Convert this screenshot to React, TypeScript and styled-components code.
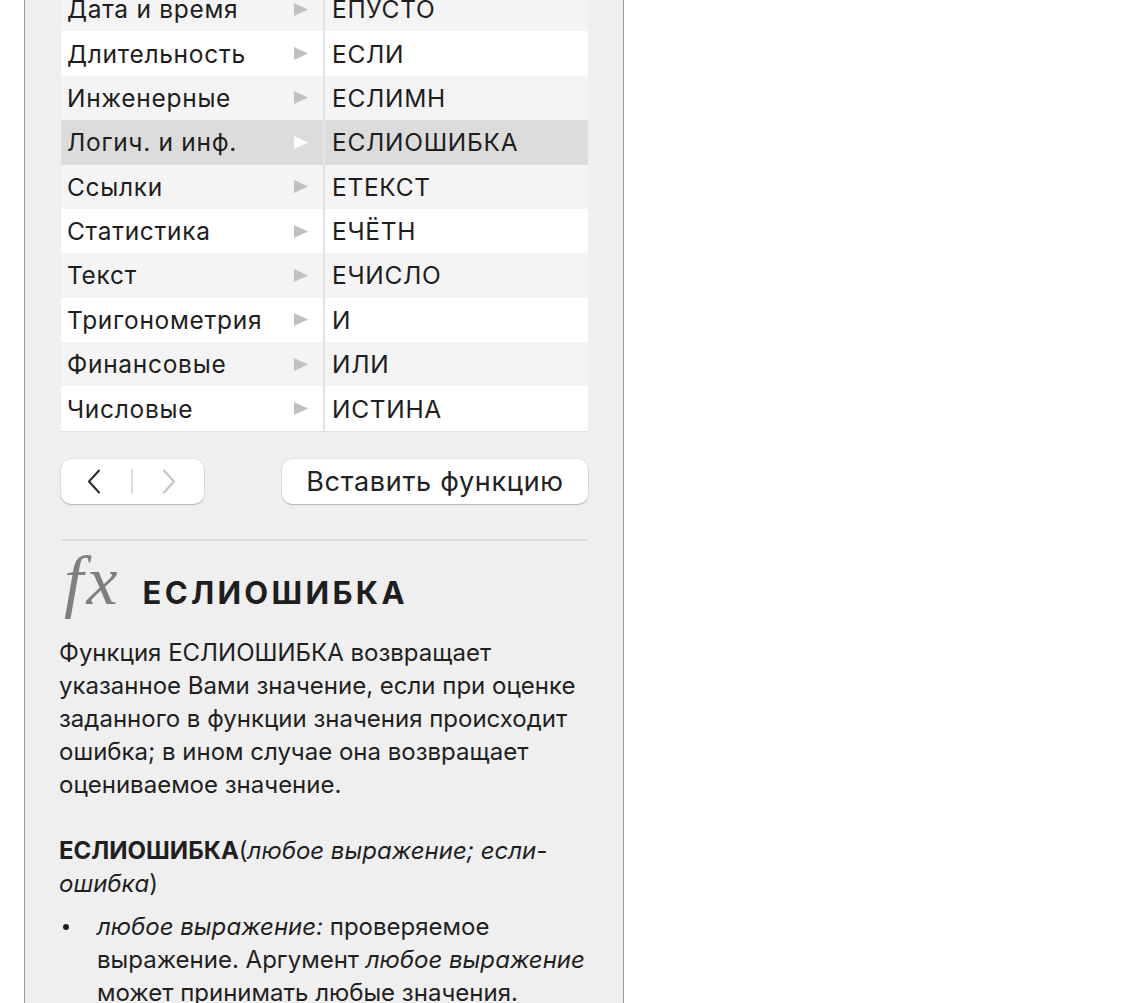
import styled, { createGlobalStyle } from "styled-components";

const GlobalStyle = createGlobalStyle`
  html, body {
    margin: 0;
    padding: 0;
    background: #ffffff;
    overflow: hidden;
  }
  body {
    font-family: Inter, "Noto Sans", "Liberation Sans", sans-serif;
    color: #1f1f1f;
  }
`;

const Panel = styled.div`
  box-sizing: border-box;
  width: 600px;
  height: 1003px;
  margin-left: 24px;
  padding: 0 35px 0 36px;
  background: #efefef;
  border-left: 1px solid #9c9c9c;
  border-right: 1px solid #9c9c9c;
  overflow: hidden;
`;

const Table = styled.div`
  margin-top: -13px;
  display: flex;
  flex-direction: column;
  border-bottom: 1px solid #e2e2e2;
`;

const Row = styled.div<{ $bg: string }>`
  display: grid;
  grid-template-columns: 262px 2px 1fr;
  height: 44.375px;
  background: ${(p) => p.$bg};
  font-size: 24.5px;
  letter-spacing: 0.7px;
  color: #1e1e1e;
`;

const Category = styled.div`
  display: flex;
  align-items: center;
  justify-content: space-between;
  padding: 0 15px 0 6px;
`;

const Divider = styled.div`
  background: #e3e3e3;
`;

const Func = styled.div`
  display: flex;
  align-items: center;
  padding-left: 7px;
`;

const ButtonRow = styled.div`
  display: flex;
  justify-content: space-between;
  margin-top: 27px;
`;

const NavButton = styled.div`
  width: 143px;
  height: 45px;
  box-sizing: border-box;
  background: #ffffff;
  border-radius: 10px;
  box-shadow: 0 1px 1.5px rgba(0, 0, 0, 0.22), 0 0 0 0.5px rgba(0, 0, 0, 0.08);
  display: flex;
  align-items: center;
  justify-content: space-between;
  padding: 0 28px 0 26px;
`;

const NavSep = styled.div`
  width: 2px;
  height: 25px;
  background: #dddddd;
`;

const InsertButton = styled.div`
  width: 306px;
  height: 45px;
  box-sizing: border-box;
  background: #ffffff;
  border-radius: 10px;
  box-shadow: 0 1px 1.5px rgba(0, 0, 0, 0.22), 0 0 0 0.5px rgba(0, 0, 0, 0.08);
  display: flex;
  align-items: center;
  justify-content: center;
  font-size: 27px;
  letter-spacing: 0.7px;
  color: #222;
`;

const Separator = styled.div`
  height: 2px;
  background: #dcdcdc;
  margin-top: 35px;
`;

const Header = styled.div`
  display: flex;
  align-items: baseline;
  gap: 22px;
  margin-top: 10px;
  padding-left: 3px;
`;

const Fx = styled.span`
  font-family: "Liberation Serif", "DejaVu Serif", serif;
  font-style: italic;
  font-size: 70px;
  line-height: 60px;
  letter-spacing: 3px;
  color: #7f7f7f;
`;

const Title = styled.h1`
  margin: 0;
  font-size: 31px;
  font-weight: 700;
  letter-spacing: 3.3px;
  color: #1e1e1e;
`;

const Description = styled.div`
  width: 533px;
  margin-left: -2px;
  margin-top: 25px;
  font-size: 24px;
  line-height: 33px;
  color: #1f1f1f;

  p {
    margin: 0;
  }
  p + p {
    margin-top: 33px;
  }
`;

const ArgList = styled.ul`
  list-style: none;
  margin: 10px 0 0;
  padding: 0;
`;

const ArgItem = styled.li`
  display: flex;
  align-items: flex-start;
`;

const Dot = styled.span`
  flex: none;
  width: 6px;
  height: 6px;
  margin: 14px 28px 0 4px;
  border-radius: 50%;
  background: #1f1f1f;
`;

const Arrow = ({ color }: { color: string }) => (
  <svg width="14" height="13" viewBox="0 0 14 13">
    <polygon points="0,0 14,6.5 0,13" fill={color} />
  </svg>
);

const Chevron = ({ dir, color }: { dir: "left" | "right"; color: string }) => (
  <svg width="14" height="25" viewBox="0 0 14 25">
    <polyline
      points={dir === "left" ? "12,1.5 2,12.5 12,23.5" : "2,1.5 12,12.5 2,23.5"}
      fill="none"
      stroke={color}
      strokeWidth="2"
      strokeLinecap="round"
      strokeLinejoin="round"
    />
  </svg>
);

const rows = [
  ["Дата и время", "ЕПУСТО"],
  ["Длительность", "ЕСЛИ"],
  ["Инженерные", "ЕСЛИМН"],
  ["Логич. и инф.", "ЕСЛИОШИБКА"],
  ["Ссылки", "ЕТЕКСТ"],
  ["Статистика", "ЕЧЁТН"],
  ["Текст", "ЕЧИСЛО"],
  ["Тригонометрия", "И"],
  ["Финансовые", "ИЛИ"],
  ["Числовые", "ИСТИНА"],
];

const selected = 3;

export default function App() {
  return (
    <>
      <GlobalStyle />
      <Panel>
        <Table>
          {rows.map(([cat, fn], i) => (
            <Row
              key={cat}
              $bg={i === selected ? "#dcdcdc" : i % 2 === 0 ? "#f4f4f4" : "#ffffff"}
            >
              <Category>
                <span>{cat}</span>
                <Arrow color={i === selected ? "#ffffff" : "#c0c0c0"} />
              </Category>
              <Divider />
              <Func>{fn}</Func>
            </Row>
          ))}
        </Table>

        <ButtonRow>
          <NavButton>
            <Chevron dir="left" color="#2a2a2a" />
            <NavSep />
            <Chevron dir="right" color="#c4c4c4" />
          </NavButton>
          <InsertButton>Вставить функцию</InsertButton>
        </ButtonRow>

        <Separator />

        <Header>
          <Fx>fx</Fx>
          <Title>ЕСЛИОШИБКА</Title>
        </Header>

        <Description>
          <p>
            Функция ЕСЛИОШИБКА возвращает указанное Вами значение, если при
            оценке заданного в функции значения происходит ошибка; в ином
            случае она возвращает оцениваемое значение.
          </p>
          <p>
            <b>ЕСЛИОШИБКА</b>(<i>любое выражение; если-ошибка</i>)
          </p>
          <ArgList>
            <ArgItem>
              <Dot />
              <span>
                <i>любое выражение:</i> проверяемое выражение. Аргумент{" "}
                <i>любое выражение</i> может принимать любые значения.
              </span>
            </ArgItem>
          </ArgList>
        </Description>
      </Panel>
    </>
  );
}
